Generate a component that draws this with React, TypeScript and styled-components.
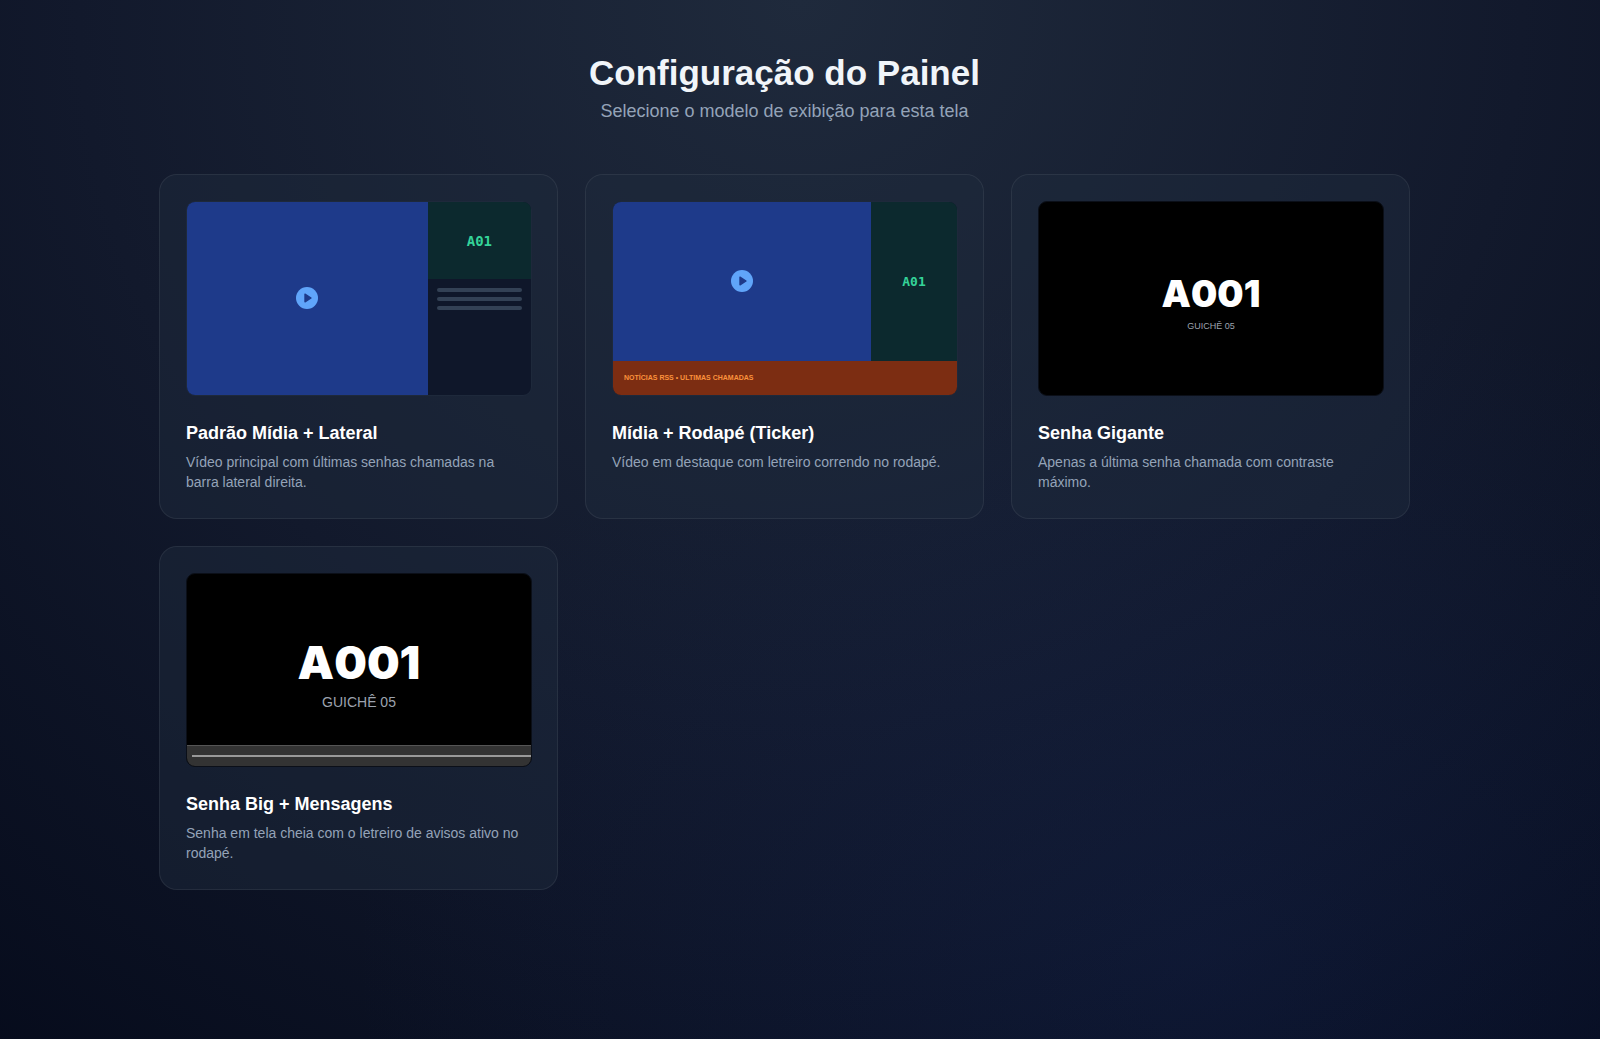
import React from 'react';
import styled, { createGlobalStyle } from 'styled-components';

const GlobalStyle = createGlobalStyle`
  * { box-sizing: border-box; }
  html { background: #020617; }
  body {
    margin: 0;
    font-family: 'Liberation Sans', Arial, sans-serif;
    color: #f8fafc;
  }
`;

const Page = styled.main`
  min-height: 100vh;
  padding: 53px 190px 53px 159px;
  background:
    radial-gradient(ellipse at 75% 92%, rgba(30, 58, 138, 0.16), transparent 50%),
    radial-gradient(circle at top, #1f2a3c, #12192c 55%, #040919 110%);
`;

const Header = styled.header`
  margin-bottom: 52px;
  text-align: center;
`;

const PageTitle = styled.h1`
  margin: 0 0 7px;
  font-size: 35px;
  line-height: 40px;
  font-weight: 700;
  color: #f1f5f9;
`;

const Subtitle = styled.p`
  margin: 0;
  font-size: 18px;
  line-height: 22px;
  color: #94a3b8;
`;

const Grid = styled.div`
  display: grid;
  grid-template-columns: repeat(auto-fill, minmax(340px, 1fr));
  gap: 27px;
`;

const Card = styled.button`
  display: flex;
  flex-direction: column;
  align-items: stretch;
  padding: 26px 25px 26px 26px;
  border: 1px solid rgba(255, 255, 255, 0.07);
  border-radius: 18px;
  background: rgba(30, 41, 59, 0.5);
  font: inherit;
  color: inherit;
  text-align: left;
  cursor: pointer;
`;

const CardTitle = styled.h2`
  margin: 26px 0 8px;
  font-size: 18px;
  line-height: 22px;
  font-weight: 700;
  color: #fff;
`;

const CardText = styled.p`
  margin: 0;
  padding-right: 8px;
  font-size: 14px;
  line-height: 20px;
  color: #94a3b8;
`;

const Preview = styled.div<{ $dark?: boolean }>`
  display: flex;
  flex-direction: column;
  aspect-ratio: 16 / 9;
  overflow: hidden;
  border: 1px solid ${(p) => (p.$dark ? '#0b0f18' : '#1e293b')};
  border-radius: 9px;
  background: ${(p) => (p.$dark ? '#000' : '#0f172a')};
`;

const Split = styled.div<{ $columns: string }>`
  flex: 1;
  display: grid;
  grid-template-columns: ${(p) => p.$columns};
`;

const Media = styled.div`
  display: flex;
  align-items: center;
  justify-content: center;
  background: #1e3a8a;
`;

const Side = styled.div`
  display: grid;
  grid-template-rows: 2fr 3fr;
`;

const Ticket = styled.div<{ $size: number }>`
  display: flex;
  align-items: center;
  justify-content: center;
  background: #0c292e;
  color: #34d399;
  font-family: 'DejaVu Sans Mono', monospace;
  font-size: ${(p) => p.$size}px;
  font-weight: 700;
`;

const History = styled.div`
  display: flex;
  flex-direction: column;
  gap: 5px;
  padding: 9px;
`;

const HistoryLine = styled.span`
  height: 4px;
  border-radius: 2px;
  background: #334155;
`;

const NewsBar = styled.div`
  display: flex;
  align-items: center;
  height: 34px;
  padding: 0 11px;
  background: #7c2d12;
  color: #fb923c;
  font-size: 7px;
  font-weight: 700;
`;

const Call = styled.div<{ $large?: boolean }>`
  flex: 1;
  display: flex;
  flex-direction: column;
  align-items: center;
  justify-content: center;
  padding-top: ${(p) => (p.$large ? 32 : 11)}px;
`;

const CallNumber = styled.span<{ $large?: boolean }>`
  font-family: 'Arial Black', Inter, sans-serif;
  font-size: ${(p) => (p.$large ? 46 : 37)}px;
  line-height: ${(p) => (p.$large ? 45 : 36)}px;
  font-weight: 900;
  color: #fff;
`;

const CallDesk = styled.span<{ $large?: boolean }>`
  margin-top: 9px;
  font-size: ${(p) => (p.$large ? 14 : 9)}px;
  color: #9ca3af;
`;

const MessageBar = styled.div`
  display: flex;
  align-items: center;
  height: 21px;
  padding-left: 5px;
  border-top: 1px solid #555;
  background: #333;
`;

const MessageLine = styled.span`
  flex: 1;
  height: 2px;
  background: #999;
`;

const PlayIcon = () => (
  <svg width="22" height="22" viewBox="0 0 22 22" aria-hidden="true">
    <circle cx="11" cy="11" r="11" fill="#60a5fa" />
    <path d="M9 7.2v7.6l6-3.8z" fill="#1e3a8a" stroke="#1e3a8a" strokeWidth="1.4" strokeLinejoin="round" />
  </svg>
);

type ModelProps = { title: string; text: string; dark?: boolean; children: React.ReactNode };

const Model = ({ title, text, dark, children }: ModelProps) => (
  <Card type="button">
    <Preview $dark={dark}>{children}</Preview>
    <CardTitle>{title}</CardTitle>
    <CardText>{text}</CardText>
  </Card>
);

export default function App() {
  return (
    <>
      <GlobalStyle />
      <Page>
        <Header>
          <PageTitle>Configuração do Painel</PageTitle>
          <Subtitle>Selecione o modelo de exibição para esta tela</Subtitle>
        </Header>
        <Grid>
          <Model
            title="Padrão Mídia + Lateral"
            text="Vídeo principal com últimas senhas chamadas na barra lateral direita."
          >
            <Split $columns="7fr 3fr">
              <Media><PlayIcon /></Media>
              <Side>
                <Ticket $size={14}>A01</Ticket>
                <History>
                  <HistoryLine />
                  <HistoryLine />
                  <HistoryLine />
                </History>
              </Side>
            </Split>
          </Model>
          <Model title="Mídia + Rodapé (Ticker)" text="Vídeo em destaque com letreiro correndo no rodapé.">
            <Split $columns="3fr 1fr">
              <Media><PlayIcon /></Media>
              <Ticket $size={13}>A01</Ticket>
            </Split>
            <NewsBar>NOTÍCIAS RSS • ULTIMAS CHAMADAS</NewsBar>
          </Model>
          <Model dark title="Senha Gigante" text="Apenas a última senha chamada com contraste máximo.">
            <Call>
              <CallNumber>A001</CallNumber>
              <CallDesk>GUICHÊ 05</CallDesk>
            </Call>
          </Model>
          <Model
            dark
            title="Senha Big + Mensagens"
            text="Senha em tela cheia com o letreiro de avisos ativo no rodapé."
          >
            <Call $large>
              <CallNumber $large>A001</CallNumber>
              <CallDesk $large>GUICHÊ 05</CallDesk>
            </Call>
            <MessageBar><MessageLine /></MessageBar>
          </Model>
        </Grid>
      </Page>
    </>
  );
}
